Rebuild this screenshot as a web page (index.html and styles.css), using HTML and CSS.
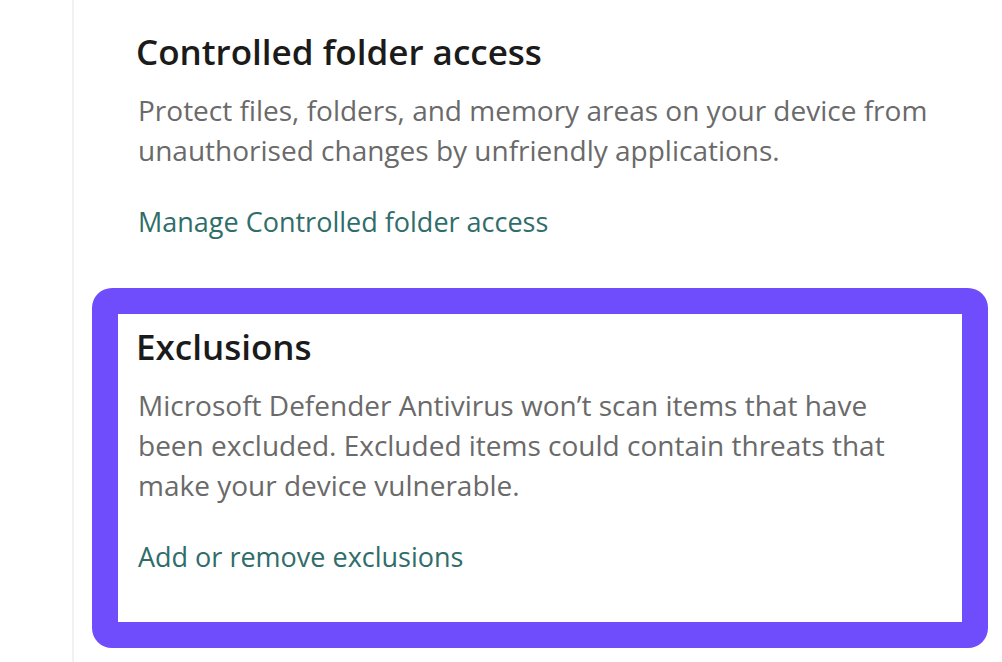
FILE: index.html
```html
<!DOCTYPE html>
<html>
<head>
<meta charset="utf-8">
<link rel="stylesheet" href="styles.css">
</head>
<body>
<div class="page">
  <div class="gutter"></div>
  <main class="content">
    <section class="section">
      <h2 class="title">Controlled folder access</h2>
      <p class="desc">Protect files, folders, and memory areas on your device from unauthorised changes by unfriendly applications.</p>
      <a class="link" href="#">Manage Controlled folder access</a>
    </section>
    <div class="highlight">
      <section class="section inner">
        <h2 class="title">Exclusions</h2>
        <p class="desc">Microsoft Defender Antivirus won’t scan items that have been excluded. Excluded items could contain threats that make your device vulnerable.</p>
        <a class="link" href="#">Add or remove exclusions</a>
      </section>
    </div>
  </main>
</div>
</body>
</html>
```
FILE: styles.css
```css
html, body {
  margin: 0;
  padding: 0;
  background: #ffffff;
}
.page {
  display: flex;
  width: 1002px;
  height: 662px;
  overflow: hidden;
  font-family: "Open Sans", "Noto Sans", sans-serif;
}
.gutter {
  width: 72px;
  flex: none;
}
.content {
  flex: 1;
  border-left: 2px solid #f1f1f1;
  padding-top: 29px;
}
.section {
  display: flex;
  flex-direction: column;
  align-items: flex-start;
  padding-left: 62px;
}
.title {
  margin: 0;
  font-size: 35px;
  font-weight: 600;
  color: #1b1b1b;
  line-height: 46px;
}
.desc {
  margin: 15px 0 0 2px;
  font-size: 28px;
  line-height: 40px;
  color: #6a6a6a;
  width: 795px;
}
.link {
  display: block;
  margin: 34px 0 0 2px;
  font-size: 27px;
  line-height: 36px;
  color: #2f6d6a;
  text-decoration: none;
}
.highlight {
  margin-top: 48px;
  margin-left: 18px;
  width: 844px;
  height: 308px;
  border: 26px solid #6f4dfc;
  border-radius: 20px;
  background: #fff;
  box-sizing: content-box;
}
.inner {
  padding-left: 18px;
  padding-top: 10px;
}
```
